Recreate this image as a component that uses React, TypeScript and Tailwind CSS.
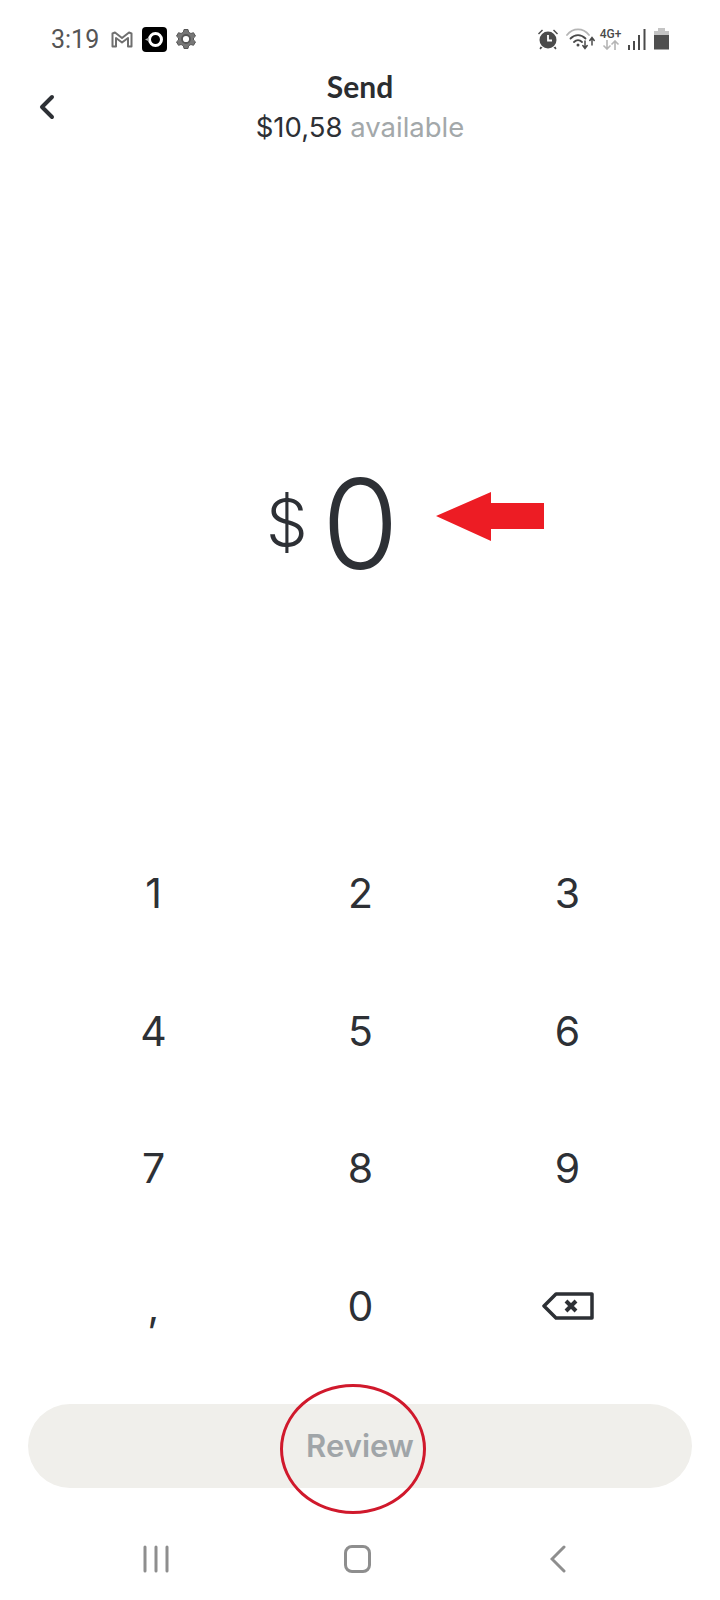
import { ChevronLeft } from 'lucide-react';

const keys = ['1', '2', '3', '4', '5', '6', '7', '8', '9', ',', '0'];

function GmailMark() {
  return (
    <svg width="22" height="17" viewBox="0 0 22 17" fill="none" stroke="#6f6f6f" strokeWidth="2">
      <path d="M1.5 15.5V2.5L4 1.5 11 7l7-5.500 2.500 1V15.500h-3.500V7l-6 4.500L5 7v8.500z" strokeLinejoin="round" />
    </svg>
  );
}

function CameraBadge() {
  return (
    <div className="w-[25px] h-[25px] rounded-[4px] bg-black flex items-center justify-center">
      <svg width="25" height="25" viewBox="0 0 25 25">
        <circle cx="13.500" cy="12.500" r="6" fill="none" stroke="#fff" strokeWidth="3" />
        <path d="M3 12.500 7 10.500v4z" fill="#aaa" />
      </svg>
    </div>
  );
}

function Gear() {
  return (
    <svg width="20" height="22" viewBox="0 0 20 22" fill="none" stroke="#555" strokeLinejoin="round">
      <path
        d="M8 1.500h4l.6 2.700 2.300 1.300 2.600-.8 2 3.400-2 1.900v2l2 1.900-2 3.400-2.600-.8-2.300 1.300-.6 2.700H8l-.6-2.700-2.300-1.300-2.600.8-2-3.400 2-1.900v-2l-2-1.900 2-3.400 2.600.8 2.300-1.300z"
        fill="#777"
        strokeWidth="1"
      />
      <circle cx="10" cy="11" r="4" fill="#fff" strokeWidth="1.800" />
    </svg>
  );
}

function Alarm() {
  return (
    <svg width="22" height="22" viewBox="0 0 22 22" fill="#4a4a4a">
      <circle cx="11" cy="12" r="8.500" />
      <path d="M1 5.500 5 1.500l1 1-4 4zM21 5.500l-4-4-1 1 4 4zM3.500 18.500l2 1-2 2-1-1zM18.500 18.500l-2 1 2 2 1-1z" />
      <path d="M11 7v5.500h4" fill="none" stroke="#fff" strokeWidth="1.800" />
    </svg>
  );
}

function Wifi() {
  return (
    <svg width="29" height="22" viewBox="0 0 29 22" fill="none" strokeLinecap="round">
      <path d="M1 7C7-.5 17-.5 23 7" stroke="#b5b5b5" strokeWidth="1.800" />
      <path d="M4.500 10.500c4.500-4.500 10.500-4.500 15 0" stroke="#4a4a4a" strokeWidth="1.800" />
      <path d="M8 14c2.500-2.500 5.500-2.500 8 0" stroke="#4a4a4a" strokeWidth="1.800" />
      <circle cx="12" cy="17" r="1.500" fill="#4a4a4a" />
      <path d="M19 13v7M16.800 17.500 19 20.500l2.200-3" stroke="#4a4a4a" strokeWidth="1.500" />
      <path d="M26 10v7M23.800 12.500 26 9.500l2.200 3" stroke="#4a4a4a" strokeWidth="1.500" />
    </svg>
  );
}

function NetworkType() {
  return (
    <div className="flex flex-col items-center w-[21px]">
      <span className="text-[12px] leading-[12px] font-medium text-[#4a4a4a] font-['Roboto',sans-serif]">4G+</span>
      <svg width="18" height="10" viewBox="0 0 18 10" fill="none" stroke="#b5b5b5" strokeWidth="1.600">
        <path d="M5 0v9M1.500 5.500 5 9l3.500-3.500" />
        <path d="M13 10V1M9.500 4.500 13 1l3.500 3.500" />
      </svg>
    </div>
  );
}

function Signal() {
  return (
    <svg width="18" height="21" viewBox="0 0 18 21" fill="#4a4a4a">
      <rect x="0" y="16" width="2" height="5" />
      <rect x="5" y="12" width="2" height="9" />
      <rect x="10" y="6" width="2" height="15" />
      <rect x="15.500" y="0" width="2" height="21" />
    </svg>
  );
}

function Battery() {
  return (
    <svg width="15" height="22" viewBox="0 0 15 22">
      <path d="M4 0h7v3h4v5H0V3h4z" fill="#c4c4c4" />
      <path d="M0 7h15v14.500H0z" fill="#4f4f4f" />
    </svg>
  );
}

function BackspaceKey() {
  return (
    <svg width="52" height="28" viewBox="0 0 52 28" fill="none" stroke="#2d3035" strokeWidth="3.500" strokeLinejoin="round">
      <path d="M14 2h36v24H14L2 14z" />
      <path d="M24 9l10 10M34 9 24 19" strokeWidth="4" />
    </svg>
  );
}

export default function App() {
  return (
    <div className="relative w-[720px] h-[1600px] bg-white overflow-hidden font-['Inter',sans-serif] text-[#2d3035]">
      {/* status bar */}
      <div className="h-[78px] pl-[51px] pr-[51px] flex items-center justify-between">
        <div className="flex items-center">
          <span className="text-[25px] leading-none text-[#555] font-['Roboto',sans-serif] w-[60px]">3:19</span>
          <GmailMark />
          <div className="ml-[9px]"><CameraBadge /></div>
          <div className="ml-[9px]"><Gear /></div>
        </div>
        <div className="flex items-center gap-[7px]">
          <Alarm />
          <Wifi />
          <div className="ml-[-2px]"><NetworkType /></div>
          <Signal />
          <div className="ml-[1px]"><Battery /></div>
        </div>
      </div>

      {/* header */}
      <div className="relative flex flex-col items-center mt-[-7px]">
        <span className="text-[30px] leading-[30px] font-bold font-['Lato',sans-serif] text-[#2b2d30]">Send</span>
        <span className="mt-[10px] text-[27.500px] leading-[32px]">
          $10,58 <span className="text-[#a3a8aa]">available</span>
        </span>
        <button className="absolute left-[27px] top-[16px]">
          <ChevronLeft size={40} strokeWidth={2.400} />
        </button>
      </div>

      {/* amount */}
      <div className="mt-[325px] h-[110px] flex items-center pl-[266px]">
        <span className="text-[66px] leading-none font-[350] mr-[14px] mb-[3px]">$</span>
        <span className="text-[125px] leading-none font-[350]">0</span>
      </div>

      {/* keypad */}
      <div className="mt-[247px] ml-[50px] w-[621px] grid grid-cols-3 auto-rows-[137.500px]">
        {keys.map((key) => (
          <button key={key} className="flex items-center justify-center text-[41px] leading-none">
            {key}
          </button>
        ))}
        <button className="flex items-center justify-center">
          <BackspaceKey />
        </button>
      </div>

      {/* review button */}
      <div className="px-[28px] mt-[29px]">
        <button className="w-full h-[84px] rounded-full bg-[#f0efeb] text-[#a0a5a8] text-[31px] font-semibold">
          Review
        </button>
      </div>

      {/* android nav bar */}
      <div className="mt-[44px] h-[54px] flex items-center justify-between pl-[143px] pr-[154px] text-[#8e8e8e]">
        <svg width="26" height="28" viewBox="0 0 26 28" stroke="currentColor" strokeWidth="3" strokeLinecap="round">
          <path d="M2 2v24M13 2v24M24 2v24" />
        </svg>
        <div className="mr-[5px] w-[27px] h-[28px] rounded-[8px] border-[3.500px] border-[#8e8e8e]" />
        <svg width="16" height="28" viewBox="0 0 16 28" fill="none" stroke="currentColor" strokeWidth="3" strokeLinecap="round">
          <path d="M14 2 2 14l12 12" />
        </svg>
      </div>

      {/* red annotations over the page */}
      <svg className="absolute left-[436px] top-[492px]" width="108" height="49" viewBox="0 0 108 49">
        <path d="M0 24 55 0v11h53v26H55v12z" fill="#ed1c24" />
      </svg>
      <div className="absolute left-[280px] top-[1384px] w-[146px] h-[130px] rounded-[50%] border-[3px] border-[#d0192c]" />
    </div>
  );
}
